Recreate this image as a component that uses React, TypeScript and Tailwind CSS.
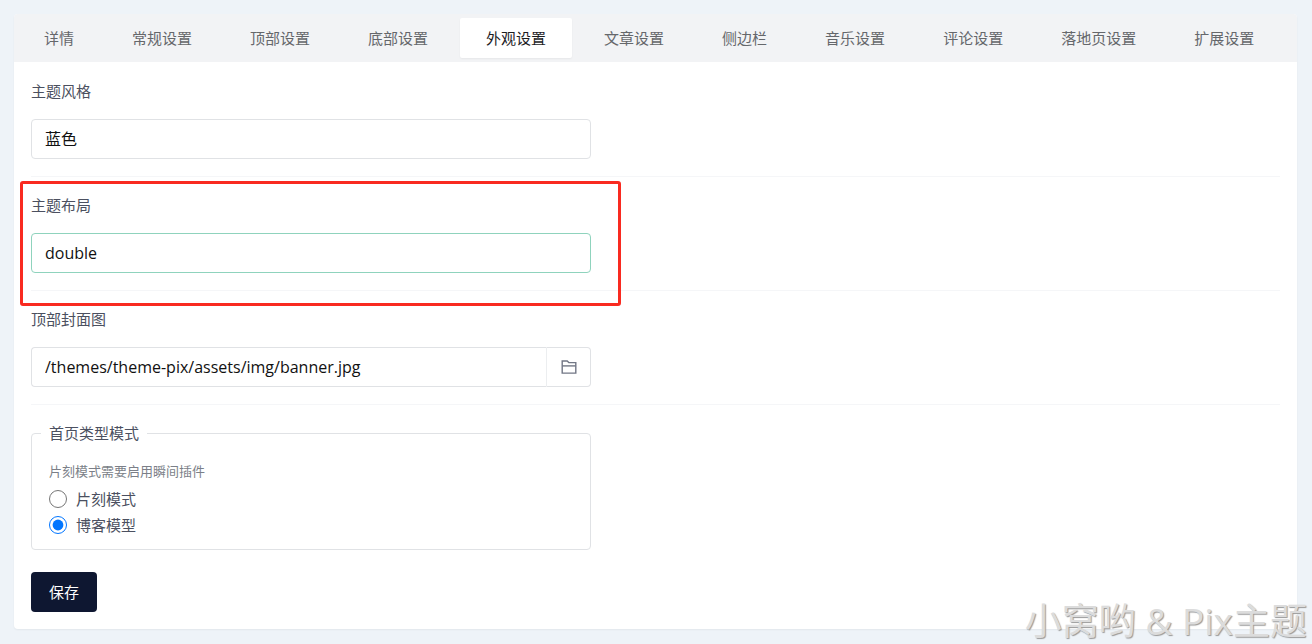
import { useState } from "react";
import type { ReactNode } from "react";

const TABS = [
  "详情",
  "常规设置",
  "顶部设置",
  "底部设置",
  "外观设置",
  "文章设置",
  "侧边栏",
  "音乐设置",
  "评论设置",
  "落地页设置",
  "扩展设置",
];

const MODES = ["片刻模式", "博客模型"];

function Field({ id, label, children }: { id: string; label: string; children: ReactNode }) {
  return (
    <div className="relative border-b border-[#f5f6f8] pb-[17px] pt-4">
      <label htmlFor={id} className="block w-fit leading-6 text-[#4b5060]">
        {label}
      </label>
      <div className="mt-4 flex h-10 max-w-[560px] font-['Open_Sans','Noto_Sans_CJK_SC',sans-serif] text-base">
        {children}
      </div>
    </div>
  );
}

function FolderIcon() {
  return (
    <svg viewBox="0 0 16 16" className="size-4" fill="none" stroke="#727785" strokeWidth="1.4" aria-hidden="true">
      <path d="M1.2 14.1V2H6.2L7.8 3.6H14.8V14.1Z" />
      <path d="M1.2 6.9H14.8" />
    </svg>
  );
}

export default function App() {
  const [tab, setTab] = useState("外观设置");
  const [style, setStyle] = useState("蓝色");
  const [layout, setLayout] = useState("double");
  const [cover, setCover] = useState("/themes/theme-pix/assets/img/banner.jpg");
  const [mode, setMode] = useState("博客模型");

  return (
    <div className="relative min-h-screen bg-[#eef3f8] py-[14px] pl-[14px] pr-[15px] font-['Noto_Sans_CJK_SC',sans-serif] text-[15px]">
      <main className="rounded-[4px] bg-white shadow-xs">
        <nav className="flex flex-wrap gap-[6px] rounded-t-[4px] bg-[#f2f3f5] p-1">
          {TABS.map((name) => (
            <button
              key={name}
              type="button"
              onClick={() => setTab(name)}
              className={
                name === tab
                  ? "h-10 rounded-[2px] bg-white px-[26px] text-[#1d1d1f] shadow-xs"
                  : "h-10 rounded-[2px] px-[26px] text-[#65676b]"
              }
            >
              {name}
            </button>
          ))}
        </nav>

        <form className="px-[17px] pb-[17px] pt-px" onSubmit={(e) => e.preventDefault()}>
          <Field id="style" label="主题风格">
            <input
              id="style"
              value={style}
              onChange={(e) => setStyle(e.target.value)}
              className="w-full rounded-[4px] border border-[#e0e2e5] px-[13px] text-[#111] outline-none"
            />
          </Field>
          <Field id="layout" label="主题布局">
            <input
              id="layout"
              value={layout}
              onChange={(e) => setLayout(e.target.value)}
              className="w-full rounded-[4px] border border-[#8fd3bd] px-[13px] text-[#111] outline-none"
            />
            <div className="pointer-events-none absolute -left-[11px] top-1 h-[125px] w-[601px] rounded-[3px] border-[3px] border-[#f92a20]" />
          </Field>
          <Field id="cover" label="顶部封面图">
            <input
              id="cover"
              value={cover}
              onChange={(e) => setCover(e.target.value)}
              className="min-w-0 flex-1 rounded-l-[4px] border border-[#e0e2e5] border-r-[#eceef0] px-[13px] text-[#111] outline-none"
            />
            <button
              type="button"
              aria-label="选择文件"
              className="flex w-11 items-center justify-center rounded-r-[4px] border border-l-0 border-[#e0e2e5]"
            >
              <FolderIcon />
            </button>
          </Field>

          <fieldset className="mt-4 max-w-[560px] rounded-[4px] border border-[#e0e2e5] px-[9px] pb-[11px]">
            <legend className="px-2 leading-6 text-[#4b5060]">首页类型模式</legend>
            <div className="px-2 pt-4">
              <p className="text-[13px] leading-5 text-[#7b7f88]">片刻模式需要启用瞬间插件</p>
              <div className="mt-[5px]">
                {MODES.map((name) => (
                  <label key={name} className="flex h-[26px] items-center gap-[9px] text-[#4b5060]">
                    <input
                      type="radio"
                      name="mode"
                      checked={mode === name}
                      onChange={() => setMode(name)}
                      className="size-[18px]"
                    />
                    {name}
                  </label>
                ))}
              </div>
            </div>
          </fieldset>

          <button type="submit" className="mt-[22px] h-10 rounded-[4px] bg-[#0e1731] px-[18px] text-white">
            保存
          </button>
        </form>
      </main>
      <div className="pointer-events-none absolute bottom-0 right-[5px] font-['Open_Sans','Noto_Sans_CJK_SC',sans-serif] text-[37px] leading-[46px] text-[#dcdcdc] [text-shadow:1px_1px_1px_#999]">
        小窝哟 &amp; Pix主题
      </div>
    </div>
  );
}
